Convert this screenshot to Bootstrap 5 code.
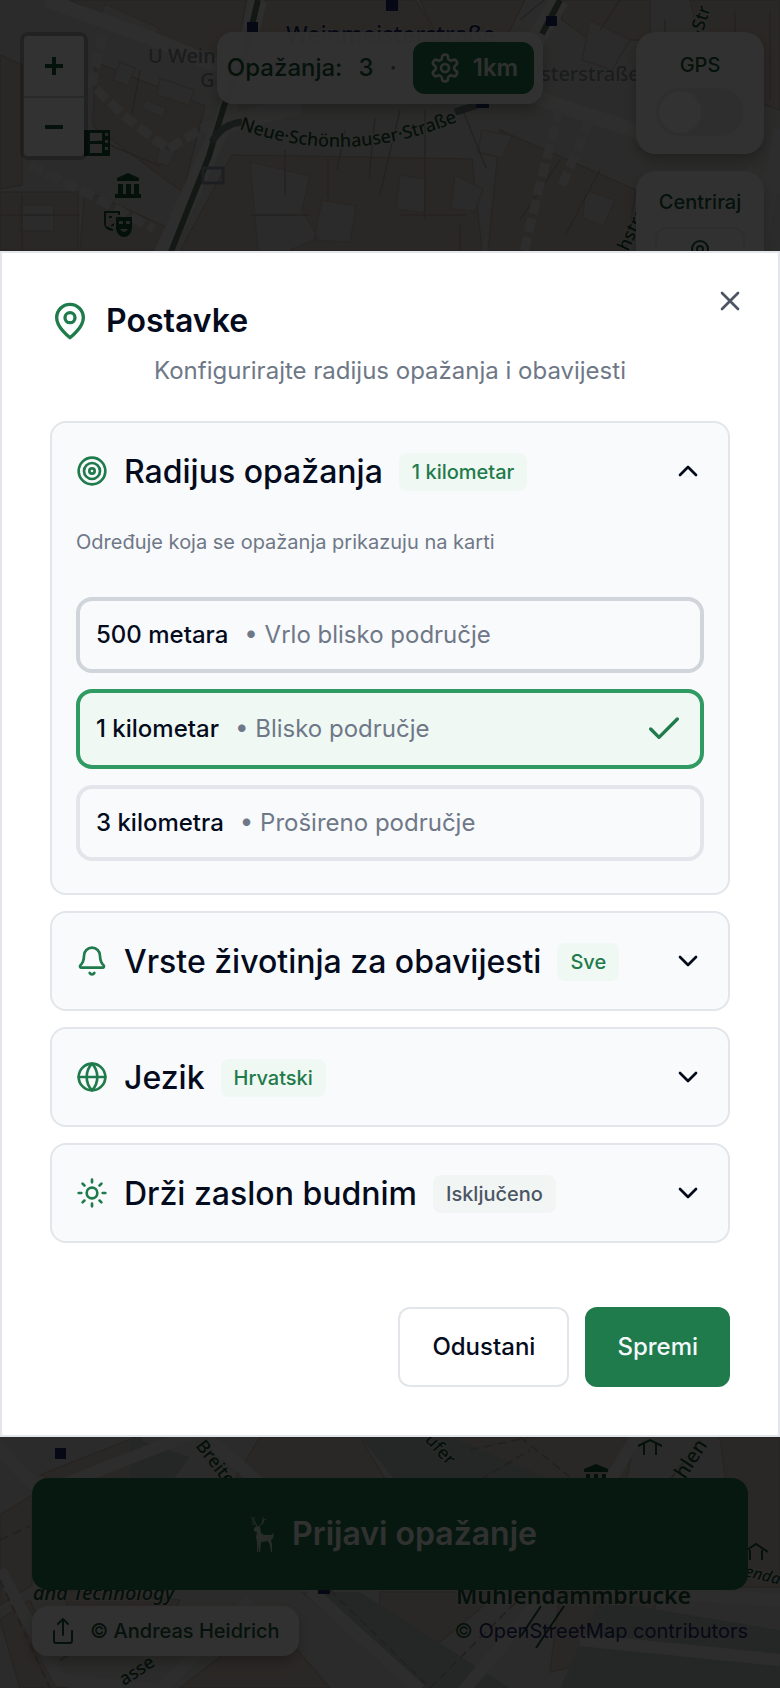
<!DOCTYPE html>
<html lang="hr">
<head>
<meta charset="utf-8">
<meta name="viewport" content="width=device-width, initial-scale=1">
<title>Postavke</title>
<link rel="stylesheet" href="https://cdn.jsdelivr.net/npm/bootstrap@5.3.0/dist/css/bootstrap.min.css">
<style>
:root{--green:#1f7b4b;--green-dark:#1d5c3b;--line:#e2e6ea;--ink:#040b1c;--soft:#6e7887;--tint:#f0f8f4}
body{font-family:Inter,"Liberation Sans",sans-serif;font-size:24px;line-height:36px;color:var(--ink);background:#dedbd8}
svg{display:block;flex:none}
.ico{fill:none;stroke:currentColor;stroke-width:2;stroke-linecap:round;stroke-linejoin:round}
.ico-32{width:32px;height:32px}
.ico-40{width:40px;height:40px}
.t20{font-size:20px;line-height:30px}
.t32{font-size:32px;line-height:40px}
.w500{font-weight:500}

/* map screen */
.map-art{z-index:0}
.hud{z-index:1;color:var(--green-dark)}
.hud-top{padding:32px 16px 0 20px}
.hud-side{flex:1 1 0}
.hud-bottom{padding:0 32px 32px}
.zoom-box{border:4px solid rgba(0,0,0,.2);border-radius:8px;width:68px}
.zoom-box button{height:60px;border:0;background:#fafafa;padding:0;color:var(--green-dark)}
.zoom-box button:first-child{border-radius:4px 4px 0 0}
.zoom-box button:last-child{border-top:2px solid #ccc;border-radius:0 0 4px 4px}
.zoom-box path{fill:none;stroke:currentColor;stroke-width:4}
.pane{background:rgba(245,245,245,.96);border-radius:16px;box-shadow:0 6px 14px rgba(0,0,0,.25)}
.status{padding:10px 9px 10px 10px;margin-right:24px;gap:16px}
.range-btn{background:var(--green);color:#e8f0ec;border-radius:12px;padding:8px 16px;gap:12px;border:0}
.side{width:128px;gap:17px}
.side .pane{border-radius:20px;padding:18px 10px}
.side .pane-center{padding-top:16px}
.gps-switch.form-check-input{width:88px;height:48px;margin:8px 0 0;border:0;border-radius:24px;background-color:#e6e6e6;box-shadow:none;--bs-form-switch-bg:url("data:image/svg+xml,%3csvg xmlns='http://www.w3.org/2000/svg' viewBox='-4 -4 8 8'%3e%3ccircle r='3.5' fill='%23f8f8f8'/%3e%3c/svg%3e");background-image:url("data:image/svg+xml,%3csvg xmlns='http://www.w3.org/2000/svg' viewBox='-4 -4 8 8'%3e%3ccircle r='3.5' fill='%23f8f8f8'/%3e%3c/svg%3e")}
.center-btn{width:90px;height:56px;border-radius:12px;border:2px solid #e6e6e6;background:#f5f5f5;margin-top:10px;color:var(--green-dark)}
.report-btn{background:var(--green);color:#f4f4f4;border-radius:16px;padding:36px;border:0;gap:16px}
.credit{padding:10px 19px 10px 16px;gap:14px;color:var(--green-dark);text-decoration:none}
.osm a{color:#232c6a;text-decoration:none}

/* dialog */
.modal-backdrop{--bs-backdrop-opacity:.8}
.settings{--bs-modal-margin:0px;--bs-modal-width:100%}
.settings .modal-dialog{max-width:800px;margin:0 auto}
.settings .modal-content{border:2px solid var(--line);border-radius:0;padding:48px;color:var(--ink)}
.close-btn{top:32px;right:32px;color:#4b5563;background:none;border:0;padding:0}
.lead-in{margin:12px 0 32px}
.panel{border:2px solid var(--line);border-radius:16px;background:#f9fafc}
.panel-head{padding:24px;gap:16px;border:0;background:none;color:var(--ink);height:96px}
.panel-head .ico:first-child,.pin{color:var(--green)}
.head-text{padding-top:2px;font-weight:500}
.tag{background:var(--tint);color:var(--green);border-radius:8px;padding:4px 13px;margin-top:2px;font-weight:500}
.tag-off{background:#f1f6f5;color:#4b5563}
.soft{color:var(--soft)}
.panel-body{padding:8px 24px 32px}
.choices{margin-top:40px}
.choice{border:4px solid var(--line);border-radius:16px;padding:16px;gap:16px;cursor:pointer}
.choice-hot{border-color:#cfd5da}
.btn-check:checked+.choice{border-color:#2f9b62;background:var(--tint)}
.choice .ico{color:var(--green)}
.actions{margin-top:64px}
.act{border-radius:12px;padding:20px 32px;border:2px solid var(--line);background:#fff;color:var(--ink);font-weight:500}
.act-main{background:var(--green);border-color:var(--green);color:#f4f8fb;padding:20px 30px}
</style>
</head>
<body>
<div class="position-relative min-vh-100 d-flex flex-column justify-content-between overflow-hidden">
  <svg class="map-art position-absolute top-0 start-0 w-100 h-100" viewBox="0 0 780 1688" preserveAspectRatio="xMidYMid slice" aria-hidden="true">
    <rect width="780" height="1688" fill="#dad8d5"/>
    <!-- northern blocks -->
    <g fill="#d3c6bc" stroke="#bfb3aa" stroke-width="1.5">
      <path d="M70 0h176l-8 55-30 10-48-20zM0 55l22 10v120l-22 4zM95 62l110 44-22 86-90-66zM0 192h78v58H0zM85 190l88 40-14 20H80zM265 0h150l20 30-20 4H258zM420 0h105l-18 36h-70zM560 0h90v40h-60l-28-20zM690 0h90v110l-70-24zM232 155l240 4 10 92H180zM500 130l136 60-10 61H488z"/>
    </g>
    <g fill="#dad8d5" stroke="#c5bbb3" stroke-width="1.5">
      <path d="M105 4l54 24-4 14-56-22zM120 62l15 6-7 18-15-6zM160 78l34 12-5 15-32-10zM146 100l20 8-3 10-22-10zM250 162l60 14-8 34 16 28-30 13h-30zM322 200l34 6-6 36-36-2zM482 130l30 6-10 22-24-6zM455 175l28 14-8 22-24-2zM585 190l30 10-12 26-20-8zM590 20l40 20-18 30-30-10zM20 205h34v26H20zM400 175l26 4-2 34-28-4zM160 146l16 6-8 14-12-4z"/>
    </g>
    <path d="M285 150v45M328 158v40M345 130l-8 40M375 118l-6 60M400 110l-20 84M425 110v110M462 108l24 60M250 215h60M400 215h66M460 225v26M560 160l-40 60M600 170l-35 66M98 140l62 26M0 215h80M22 195v56M140 70l-8 44M665 20v60M735 10v100M770 10v90M520 20l24-20M620 0l-20 30" fill="none" stroke="#b5aaa2" stroke-width="1.5"/>
    <path d="M46 0L150 38 218 66 310 90 500 86 640 132" fill="none" stroke="#e8e6e4" stroke-width="14"/>
    <path d="M300 105l-70 18M258 0l-12 50-22 70-62 136M560 0l-30 50" fill="none" stroke="#e8e6e4" stroke-width="18"/>
    <path d="M258 0l-12 50-22 56-15 50-38 96M560 0l-18 34" fill="none" stroke="#60786a" stroke-width="6"/>
    <path d="M212 142q10-18 30-20M455 112q20-6 24-8" fill="none" stroke="#74887d" stroke-width="7"/>
    <path d="M102 35l-10 50 36 34 40 30 44-26M30 165l60 30 64 34M560 108l-22 84-14 60M590 120l-30 70" fill="none" stroke="#e2e0de" stroke-width="9" stroke-dasharray="14 5"/>
    <path d="M780 130l-20 120M790 190l-44-18" stroke="#e4e2e0" stroke-width="14"/>
    <g fill="#232c6a"><path d="M247 22h11v10h-11zM386 0h12v11h-12zM546 16h11v10h-11zM476 103h13v5h-13z"/></g>
    <path d="M203 168h20v15h-20z" fill="none" stroke="#8d97a5" stroke-width="3"/>
    <g fill="#174f33">
      <path fill-rule="evenodd" d="M84 130h26v26H84zM90 133v8h12v-8zM90 144v9h12v-9zM105 133v3h3v-3zM105 140v3h3v-3zM105 147v3h3v-3z"/>
      <path d="M117 178l11-5 11 5v3h-22zM118 184h5v10h-5zM126 184h5v10h-5zM134 184h5v10h-5zM115 194h26v4h-26z"/>
      <path fill-rule="evenodd" d="M116 217h16v12q-2 8-8 8-6 0-8-8zM119 221v3h4v-3zM126 221v3h4v-3zM120 229q4 6 8 0z"/>
      <path d="M104 211h16v4h-2v-2h-12v13l7 3v2q-9-1-9-8zM109 216h3v2h-3zM110 226l4-3v3z"/>
    </g>
    <g font-family="Noto Sans, sans-serif" stroke="#dcdad8" stroke-width="2" paint-order="stroke">
      <g font-size="20" font-weight="500" fill="#868e90"><text x="148" y="63">U Wein</text><text x="200" y="87">G</text><text x="541" y="81">sterstraße</text></g>
      <text x="286" y="43" font-size="23" font-weight="500" fill="#232c6a">Weinmeisterstraße</text>
      <path id="neue" d="M239 129q110 40 222-9" fill="none" stroke="none"/>
      <text font-size="18" font-weight="500" fill="#174f33"><textPath href="#neue">Neue·Schönhauser·Straße</textPath></text>
      <g font-size="18" font-weight="500" fill="#174f33">
        <text transform="translate(628 252) rotate(-65)">hstra</text>
        <text transform="translate(699 44) rotate(-72)">r-Str</text>
      </g>
    </g>
    <!-- southern blocks -->
    <g fill="#d3c6bc" stroke="#bfb3aa" stroke-width="1.5">
      <path d="M40 1475l96-38h4l12 34-60 20zM0 1515l32-20v90l-32 20zM260 1437h100l30 50H230zM455 1437h180l-10 50H470zM720 1437h60v150h-40zM0 1620l30-20 36 88H20zM60 1590l120 10-20 40-70 10zM380 1592h120l-60 50-60 20zM180 1688l90-70 60 70zM560 1592h100l-20 60-90 20z"/>
    </g>
    <path d="M360 1437h90l120 50H400zM130 1437l60 20-30 40h-30zM300 1592h60l150 96h-90zM600 1600l180 30v58H560z" fill="#b9c0c1"/>
    <path d="M-10 1437q50 60 60 54t150-60M200 1432l70 60M0 1570l60 110 100 10 90-90M310 1590l110 100M640 1430l-100 170-80 95M780 1600l-190-10M580 1640l200 20" fill="none" stroke="#e4e2e0" stroke-width="12"/>
    <path d="M0 1580l50 108M330 1590l100 98M700 1440l-60 80M430 1688l90-90M520 1437l50 40M470 1450l60-13M480 1480l50-30M0 1540l30-14M60 1660l40-20" fill="none" stroke="#b0a59e" stroke-width="2" stroke-dasharray="9 5"/>
    <path d="M564 1606l-28 42M541 1606l-20 30" stroke="#174f33" stroke-width="2"/>
    <g fill="#232c6a"><path d="M55 1448h11v11H55zM318 1588h12v6h-12z"/></g>
    <path d="M584 1469l12-5 12 5v3h-24zM586 1474h4v8h-4zM594 1474h4v8h-4zM602 1474h4v8h-4z" fill="#174f33"/>
    <path d="M638 1446l12-6 12 6M644 1444v11M656 1444v11M744 1552l12-8 12 8M750 1550v10M762 1550v10" fill="none" stroke="#174f33" stroke-width="2"/>
    <g font-family="Noto Sans, sans-serif" fill="#174f33" stroke="#dcdad8" stroke-width="2" paint-order="stroke" font-size="18" font-weight="500">
      <text transform="translate(195 1446) rotate(52)">Breite</text>
      <text transform="translate(424 1440) rotate(48)">ufer</text>
      <text transform="translate(685 1480) rotate(-57)" font-size="20">hlen</text>
      <text transform="translate(124 1686) rotate(-33)">asse</text>
      <text x="33" y="1600" font-size="20" font-style="italic">and Technology</text>
      <text x="456" y="1604" font-size="23" font-weight="600">Mühlendammbrücke</text>
      <text transform="translate(744 1576) rotate(14)" font-size="16" font-style="italic">enda</text>
    </g>
  </svg>

  <header class="hud hud-top position-relative d-flex align-items-start">
    <div class="hud-side">
      <div class="zoom-box d-flex flex-column">
        <button type="button" class="d-flex align-items-center justify-content-center" aria-label="Uvećaj"><svg width="18" height="18"><path d="M0 9h18M9 0v18"/></svg></button>
        <button type="button" class="d-flex align-items-center justify-content-center" aria-label="Umanji"><svg width="18" height="18"><path d="M0 9h18"/></svg></button>
      </div>
    </div>
    <div class="pane status d-flex align-items-center w500">
      <span>Opažanja:</span><span>3</span><span class="soft">·</span>
      <button type="button" class="range-btn d-flex align-items-center fw-semibold">
        <svg class="ico ico-32" viewBox="0 0 24 24"><path d="M12.22 2h-.44a2 2 0 0 0-2 2v.18a2 2 0 0 1-1 1.73l-.43.25a2 2 0 0 1-2 0l-.15-.08a2 2 0 0 0-2.73.73l-.22.38a2 2 0 0 0 .73 2.73l.15.1a2 2 0 0 1 1 1.72v.51a2 2 0 0 1-1 1.74l-.15.09a2 2 0 0 0-.73 2.73l.22.38a2 2 0 0 0 2.73.73l.15-.08a2 2 0 0 1 2 0l.43.25a2 2 0 0 1 1 1.73V20a2 2 0 0 0 2 2h.44a2 2 0 0 0 2-2v-.18a2 2 0 0 1 1-1.73l.43-.25a2 2 0 0 1 2 0l.15.08a2 2 0 0 0 2.73-.73l.22-.39a2 2 0 0 0-.73-2.73l-.15-.08a2 2 0 0 1-1-1.74v-.5a2 2 0 0 1 1-1.74l.15-.09a2 2 0 0 0 .73-2.73l-.22-.38a2 2 0 0 0-2.73-.73l-.15.08a2 2 0 0 1-2 0l-.43-.25a2 2 0 0 1-1-1.73V4a2 2 0 0 0-2-2z"/><circle cx="12" cy="12" r="3"/></svg>
        <span>1km</span>
      </button>
    </div>
    <div class="hud-side d-flex justify-content-end">
      <div class="side d-flex flex-column t20 w500">
        <div class="pane form-switch d-flex flex-column align-items-center">
          <label for="gps">GPS</label>
          <input class="form-check-input gps-switch" type="checkbox" role="switch" id="gps">
        </div>
        <div class="pane pane-center d-flex flex-column align-items-center">
          <span>Centriraj</span>
          <button type="button" class="center-btn d-flex align-items-center justify-content-center" aria-label="Centriraj kartu"><svg class="ico" width="20" height="32" viewBox="0 0 20 32"><path d="M10 30v-4M18 10a8 8 0 1 0-16 0c0 7 8 14 8 14s8-7 8-14z"/><circle cx="10" cy="10" r="3"/></svg></button>
        </div>
      </div>
    </div>
  </header>

  <footer class="hud hud-bottom position-relative d-flex flex-column gap-3">
    <button type="button" class="report-btn t32 fw-semibold w-100 d-flex align-items-center justify-content-center">
      <svg width="33" height="36" viewBox="0 0 33 36" fill="none" stroke="currentColor" stroke-width="1" opacity=".8"><path d="M14 11l-2-5-4-5M11 5L9 6M12 8L9 8M11 4V1M16 11l4-5V1M18 8l3-2M19 5l4-2"/><path d="M11 12l3-2 3 1 1 6 3 2h7l3-2-1 5-2 2 1 4v8h-1l-1-7-2-4-7 1-1 10h-1v-9l-1 10h-1v-11l-1-5 1-5-3-1z" fill="currentColor" stroke="none"/></svg>
      <span>Prijavi opažanje</span>
    </button>
    <div class="d-flex justify-content-between align-items-center t20">
      <a href="#" class="credit pane d-flex align-items-center w500">
        <svg class="ico" width="28" height="30" viewBox="0 0 28 30"><path d="M6 15v10a2 2 0 0 0 2 2h14a2 2 0 0 0 2-2V15M10 8l5-5 5 5M15 3v16"/></svg>
        <span>© Andreas Heidrich</span>
      </a>
      <div class="osm">© <a href="#">OpenStreetMap contributors</a></div>
    </div>
  </footer>
</div>

<div class="modal-backdrop show"></div>
<div class="modal settings show d-block" tabindex="-1" role="dialog" aria-labelledby="dlg-title">
  <div class="modal-dialog modal-dialog-centered">
    <div class="modal-content">
      <button type="button" class="close-btn position-absolute" aria-label="Zatvori"><svg class="ico ico-32" viewBox="0 0 24 24"><path d="M18 6L6 18M6 6l12 12"/></svg></button>
      <div class="d-flex align-items-center gap-3">
        <svg class="ico ico-40 pin" viewBox="0 0 24 24"><path d="M20 10c0 6-8 12-8 12s-8-6-8-12a8 8 0 0 1 16 0Z"/><circle cx="12" cy="10" r="3"/></svg>
        <h1 class="t32 fw-semibold m-0" id="dlg-title">Postavke</h1>
      </div>
      <p class="soft text-center lead-in">Konfigurirajte radijus opažanja i obavijesti</p>

      <div class="d-flex flex-column gap-3">
        <section class="panel">
          <button type="button" class="panel-head w-100 d-flex align-items-center text-start" aria-expanded="true">
            <svg class="ico ico-32" viewBox="0 0 24 24"><circle cx="12" cy="12" r="10"/><circle cx="12" cy="12" r="6"/><circle cx="12" cy="12" r="2"/></svg>
            <span class="t32 head-text">Radijus opažanja</span>
            <span class="tag t20">1 kilometar</span>
            <svg class="ico ico-32 ms-auto" viewBox="0 0 24 24"><path d="M18 15l-6-6-6 6"/></svg>
          </button>
          <div class="panel-body">
            <p class="soft t20 mb-0">Određuje koja se opažanja prikazuju na karti</p>
            <div class="choices d-flex flex-column gap-3">
              <div><input class="btn-check" type="radio" name="radius" id="r500">
              <label class="choice choice-hot d-flex align-items-center" for="r500"><span class="w500">500 metara</span><span class="soft">• Vrlo blisko područje</span></label></div>
              <div><input class="btn-check" type="radio" name="radius" id="r1" checked>
              <label class="choice d-flex align-items-center" for="r1"><span class="w500">1 kilometar</span><span class="soft">• Blisko područje</span><svg class="ico ico-40 ms-auto" viewBox="0 0 24 24"><path d="M20 6L9 17l-5-5"/></svg></label></div>
              <div><input class="btn-check" type="radio" name="radius" id="r3">
              <label class="choice d-flex align-items-center" for="r3"><span class="w500">3 kilometra</span><span class="soft">• Prošireno područje</span></label></div>
            </div>
          </div>
        </section>
        <section class="panel">
          <button type="button" class="panel-head w-100 d-flex align-items-center text-start" aria-expanded="false">
            <svg class="ico ico-32" viewBox="0 0 24 24"><path d="M10.268 21a2 2 0 0 0 3.464 0M3.262 15.326A1 1 0 0 0 4 17h16a1 1 0 0 0 .74-1.673C19.41 13.956 18 12.499 18 8A6 6 0 0 0 6 8c0 4.499-1.411 5.956-2.738 7.326"/></svg>
            <span class="t32 head-text">Vrste životinja za obavijesti</span>
            <span class="tag t20">Sve</span>
            <svg class="ico ico-32 ms-auto" viewBox="0 0 24 24"><path d="M6 9l6 6 6-6"/></svg>
          </button>
        </section>
        <section class="panel">
          <button type="button" class="panel-head w-100 d-flex align-items-center text-start" aria-expanded="false">
            <svg class="ico ico-32" viewBox="0 0 24 24"><circle cx="12" cy="12" r="10"/><path d="M12 2a14.5 14.5 0 0 0 0 20 14.5 14.5 0 0 0 0-20M2 12h20"/></svg>
            <span class="t32 head-text">Jezik</span>
            <span class="tag t20">Hrvatski</span>
            <svg class="ico ico-32 ms-auto" viewBox="0 0 24 24"><path d="M6 9l6 6 6-6"/></svg>
          </button>
        </section>
        <section class="panel">
          <button type="button" class="panel-head w-100 d-flex align-items-center text-start" aria-expanded="false">
            <svg class="ico ico-32" viewBox="0 0 24 24"><circle cx="12" cy="12" r="4"/><path d="M12 2v2M12 20v2M4.93 4.93l1.41 1.41M17.66 17.66l1.41 1.41M2 12h2M20 12h2M6.34 17.66l-1.41 1.41M19.07 4.93l-1.41 1.41"/></svg>
            <span class="t32 head-text">Drži zaslon budnim</span>
            <span class="tag tag-off t20">Isključeno</span>
            <svg class="ico ico-32 ms-auto" viewBox="0 0 24 24"><path d="M6 9l6 6 6-6"/></svg>
          </button>
        </section>
      </div>

      <div class="actions d-flex justify-content-end gap-3">
        <button type="button" class="act">Odustani</button>
        <button type="button" class="act act-main">Spremi</button>
      </div>
    </div>
  </div>
</div>
<script src="https://cdn.jsdelivr.net/npm/bootstrap@5.3.0/dist/js/bootstrap.bundle.min.js"></script>
</body>
</html>
